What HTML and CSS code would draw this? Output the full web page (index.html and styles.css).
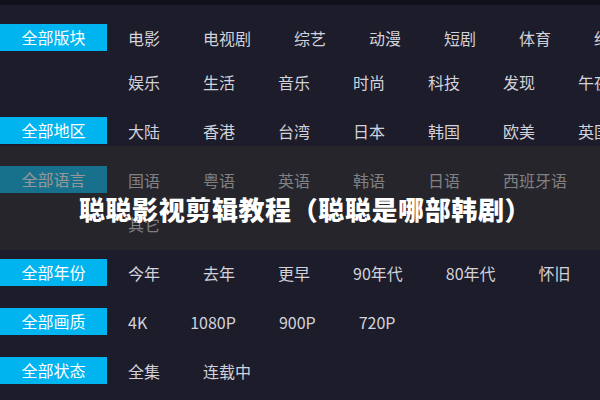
FILE: index.html
```html
<!DOCTYPE html>
<html lang="zh-CN">
<head>
  <meta charset="UTF-8" />
  <title>聪聪影视剪辑教程</title>
  <link rel="stylesheet" href="styles.css">
</head>
<body>
  <div class="top-bar"></div>

  <div class="filter-list">
    <div class="filter-group">
      <div class="filter-label">全部版块</div>
      <div class="filter-items">
        <span>电影</span><span>电视剧</span><span>综艺</span><span>动漫</span><span>短剧</span><span>体育</span><span>纪录</span>
        <span>娱乐</span><span>生活</span><span>音乐</span><span>时尚</span><span>科技</span><span>发现</span><span>午夜</span>
      </div>
    </div>

    <div class="filter-group">
      <div class="filter-label">全部地区</div>
      <div class="filter-items">
        <span>大陆</span><span>香港</span><span>台湾</span><span>日本</span><span>韩国</span><span>欧美</span><span>英国</span>
      </div>
    </div>

    <div class="filter-group">
      <div class="filter-label">全部语言</div>
      <div class="filter-items">
        <span>国语</span><span>粤语</span><span>英语</span><span>韩语</span><span>日语</span><span>西班牙语</span><span>其它</span>
      </div>
    </div>

    <div class="filter-group">
      <div class="filter-label">全部年份</div>
      <div class="filter-items">
        <span>今年</span><span>去年</span><span>更早</span><span>90年代</span><span>80年代</span><span>怀旧</span>
      </div>
    </div>

    <div class="filter-group">
      <div class="filter-label">全部画质</div>
      <div class="filter-items">
        <span>4K</span><span>1080P</span><span>900P</span><span>720P</span>
      </div>
    </div>

    <div class="filter-group">
      <div class="filter-label">全部状态</div>
      <div class="filter-items">
        <span>全集</span><span>连载中</span>
      </div>
    </div>
  </div>

  <div class="title-band">
    <h1>聪聪影视剪辑教程（聪聪是哪部韩剧）</h1>
  </div>
</body>
</html>
```

FILE: styles.css
```css
body {
  margin: 0;
  width: 600px;
  height: 400px;
  overflow: hidden;
  position: relative;
  background: #1c1c2b;
  font-family: "Noto Sans CJK SC", "Microsoft YaHei", sans-serif;
}

.top-bar {
  height: 5px;
  background: #10101a;
}

.filter-list {
  padding-top: 11px;
  display: flex;
  flex-direction: column;
  gap: 5px;
}

.filter-group {
  display: flex;
  align-items: flex-start;
}

.filter-label {
  flex: none;
  width: 107px;
  height: 27px;
  margin-top: 8px;
  background: #00b4ef;
  color: #ffffff;
  font-size: 16px;
  line-height: 27px;
  text-align: center;
}

.filter-items {
  flex: none;
  width: 505px;
  margin-left: 21px;
  display: flex;
  flex-wrap: wrap;
  column-gap: 43px;
}

.filter-items span {
  height: 44px;
  line-height: 44px;
  font-size: 16px;
  color: #d2d2da;
  white-space: nowrap;
}

.title-band {
  position: absolute;
  left: 0;
  top: 146px;
  width: 100%;
  height: 104px;
  background: rgba(46, 46, 44, 0.5);
  display: flex;
  justify-content: center;
  align-items: center;
}

.title-band h1 {
  margin: 20px 0 0 10px;
  color: #ffffff;
  font-size: 26px;
  font-weight: 900;
  letter-spacing: 0.6px;
}
```
